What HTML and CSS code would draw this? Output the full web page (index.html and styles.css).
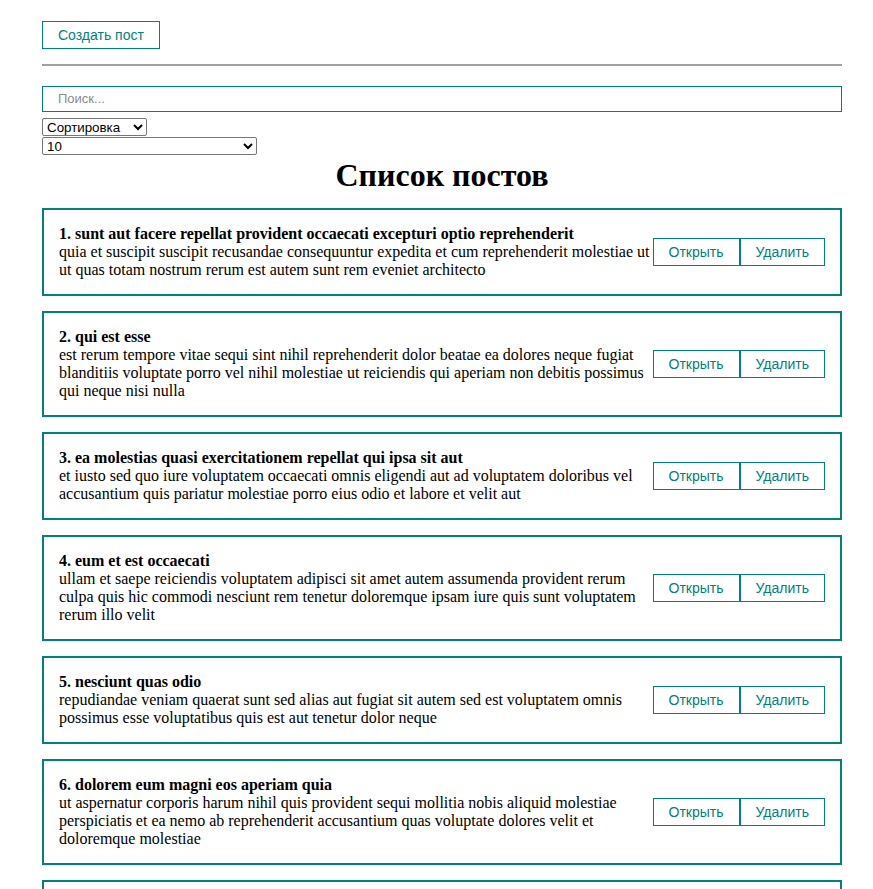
FILE: index.html
```html
<!DOCTYPE html>
<html lang="ru">
<head>
<meta charset="utf-8">
<title>Посты</title>
<link rel="stylesheet" href="styles.css">
</head>
<body>
<div class="app">
  <button class="my-btn">Создать пост</button>
  <hr class="divider">
  <input class="my-input" type="text" placeholder="Поиск...">
  <div class="select-row">
    <select class="my-select sort-select">
      <option>Сортировка</option>
    </select>
  </div>
  <div class="select-row">
    <select class="my-select limit-select">
      <option>10</option>
    </select>
  </div>
  <h1 class="list-title">Список постов</h1>

  <div class="post">
    <div class="post-content">
      <strong>1. sunt aut facere repellat provident occaecati excepturi optio reprehenderit</strong>
      <div>quia et suscipit suscipit recusandae consequuntur expedita et cum reprehenderit molestiae ut ut quas totam nostrum rerum est autem sunt rem eveniet architecto</div>
    </div>
    <div class="post-btns">
      <button class="my-btn">Открыть</button><button class="my-btn">Удалить</button>
    </div>
  </div>

  <div class="post">
    <div class="post-content">
      <strong>2. qui est esse</strong>
      <div>est rerum tempore vitae sequi sint nihil reprehenderit dolor beatae ea dolores neque fugiat blanditiis voluptate porro vel nihil molestiae ut reiciendis qui aperiam non debitis possimus qui neque nisi nulla</div>
    </div>
    <div class="post-btns">
      <button class="my-btn">Открыть</button><button class="my-btn">Удалить</button>
    </div>
  </div>

  <div class="post">
    <div class="post-content">
      <strong>3. ea molestias quasi exercitationem repellat qui ipsa sit aut</strong>
      <div>et iusto sed quo iure voluptatem occaecati omnis eligendi aut ad voluptatem doloribus vel accusantium quis pariatur molestiae porro eius odio et labore et velit aut</div>
    </div>
    <div class="post-btns">
      <button class="my-btn">Открыть</button><button class="my-btn">Удалить</button>
    </div>
  </div>

  <div class="post">
    <div class="post-content">
      <strong>4. eum et est occaecati</strong>
      <div>ullam et saepe reiciendis voluptatem adipisci sit amet autem assumenda provident rerum culpa quis hic commodi nesciunt rem tenetur doloremque ipsam iure quis sunt voluptatem rerum illo velit</div>
    </div>
    <div class="post-btns">
      <button class="my-btn">Открыть</button><button class="my-btn">Удалить</button>
    </div>
  </div>

  <div class="post">
    <div class="post-content">
      <strong>5. nesciunt quas odio</strong>
      <div>repudiandae veniam quaerat sunt sed alias aut fugiat sit autem sed est voluptatem omnis possimus esse voluptatibus quis est aut tenetur dolor neque</div>
    </div>
    <div class="post-btns">
      <button class="my-btn">Открыть</button><button class="my-btn">Удалить</button>
    </div>
  </div>

  <div class="post">
    <div class="post-content">
      <strong>6. dolorem eum magni eos aperiam quia</strong>
      <div>ut aspernatur corporis harum nihil quis provident sequi mollitia nobis aliquid molestiae perspiciatis et ea nemo ab reprehenderit accusantium quas voluptate dolores velit et doloremque molestiae</div>
    </div>
    <div class="post-btns">
      <button class="my-btn">Открыть</button><button class="my-btn">Удалить</button>
    </div>
  </div>

  <div class="post">
    <div class="post-content">
      <strong>7. magnam facilis autem</strong>
      <div>dolore placeat quibusdam ea quo vitae magni quis enim qui quis quo nemo aut saepe quidem repellat excepturi ut quia sunt ut sequi eos ea sed quas</div>
    </div>
    <div class="post-btns">
      <button class="my-btn">Открыть</button><button class="my-btn">Удалить</button>
    </div>
  </div>
</div>
</body>
</html>
```

FILE: styles.css
```css
html, body {
  margin: 0;
  padding: 0;
  background: #fff;
}

body {
  font-family: "Liberation Serif", "Times New Roman", serif;
  font-size: 16px;
  color: #000;
}

.app {
  width: 800px;
  margin: 21px 0 0 42px;
}

.my-btn {
  font-family: "Liberation Sans", Arial, sans-serif;
  font-size: 14px;
  line-height: 16px;
  padding: 5px 15px;
  color: teal;
  background: transparent;
  border: 1px solid teal;
  cursor: pointer;
  margin: 0;
}

.divider {
  margin: 15px 0 0;
  border: none;
  border-top: 2px solid #a0a0a0;
  height: 0;
}

.my-input {
  display: block;
  box-sizing: border-box;
  width: 100%;
  margin: 20px 0 6px;
  padding: 5px 15px;
  font-family: "Liberation Sans", Arial, sans-serif;
  font-size: 13px;
  line-height: 14px;
  border: 1px solid teal;
  outline: none;
}

.my-input::placeholder {
  color: #8a8a8a;
}

.select-row {
  line-height: 0;
  margin-top: 1px;
}

.my-select {
  font-family: "Liberation Sans", Arial, sans-serif;
  font-size: 13.33px;
  height: 18px;
  padding: 0;
  border: 1px solid #767676;
  border-radius: 2px;
  background: #fff;
  color: #000;
}

.sort-select {
  width: 105px;
}

.limit-select {
  width: 215px;
}

.list-title {
  text-align: center;
  font-size: 32px;
  line-height: 37px;
  margin: 2px 0 0;
}

.post {
  display: flex;
  align-items: center;
  justify-content: space-between;
  padding: 15px;
  border: 2px solid teal;
  margin-top: 14px;
  line-height: 18px;
}

.post + .post {
  margin-top: 15px;
}

.post-content {
  flex: 1;
}

.post-btns {
  display: flex;
  flex-shrink: 0;
}
```
